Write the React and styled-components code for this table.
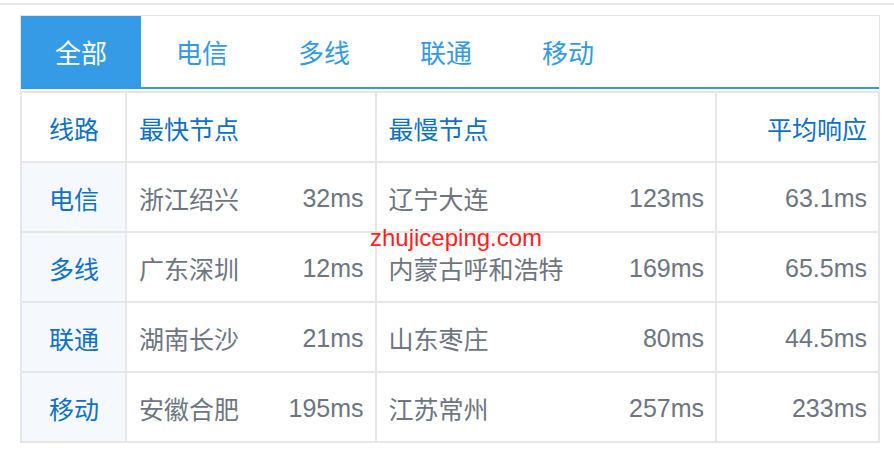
import styled, { createGlobalStyle } from "styled-components";

const Global = createGlobalStyle`
  body {
    margin: 0;
    background: #fff;
    font-family: "Liberation Sans", "Noto Sans CJK SC", sans-serif;
  }
`;

const TopRule = styled.div`
  height: 2px;
  margin-top: 3px;
  background: #e8e8e8;
`;

const Panel = styled.div`
  position: relative;
  margin: 10px 14px 0 20px;
  border: 1px solid #e5e5e5;
  border-bottom: none;
`;

const Tabs = styled.div`
  display: flex;
  height: 71px;
  border-bottom: 2px solid #3399e6;
`;

const Tab = styled.div`
  width: ${(p) => (p.active ? "120px" : "122px")};
  display: flex;
  align-items: center;
  justify-content: center;
  font-size: 26px;
  color: ${(p) => (p.active ? "#fff" : "#3399e6")};
  background: ${(p) => (p.active ? "#359be6" : "transparent")};
`;

const Table = styled.table`
  width: 860px;
  margin-top: 2px;
  margin-left: -1px;
  border-collapse: collapse;
  font-size: 25px;
`;

const Cell = styled.td`
  height: 66px;
  padding: 2px 11px 0 12px;
  border: 2px solid #e6e6e6;
  color: ${(p) => (p.head ? "#0e70c6" : "#6d7580")};
  text-align: ${(p) => p.align || "left"};
`;

const LineCell = styled(Cell)`
  width: 80px;
  text-align: center;
  color: #0e70c6;
  background: ${(p) => (p.head ? "#fff" : "#f5f9fd")};
`;

const Split = styled.div`
  display: flex;
  justify-content: space-between;
  align-items: center;
`;

const Watermark = styled.div`
  position: absolute;
  left: 349px;
  top: 208px;
  font-size: 24px;
  color: #ff1e1e;
  font-family: "Liberation Sans", sans-serif;
`;

const rows = [
  ["电信", "浙江绍兴", "32ms", "辽宁大连", "123ms", "63.1ms"],
  ["多线", "广东深圳", "12ms", "内蒙古呼和浩特", "169ms", "65.5ms"],
  ["联通", "湖南长沙", "21ms", "山东枣庄", "80ms", "44.5ms"],
  ["移动", "安徽合肥", "195ms", "江苏常州", "257ms", "233ms"],
];

export default function App() {
  return (
    <>
      <Global />
      <TopRule />
      <Panel>
        <Tabs>
          <Tab active>全部</Tab>
          <Tab>电信</Tab>
          <Tab>多线</Tab>
          <Tab>联通</Tab>
          <Tab>移动</Tab>
        </Tabs>
        <Table>
          <colgroup>
            <col style={{ width: "105px" }} />
            <col style={{ width: "250px" }} />
            <col style={{ width: "341px" }} />
            <col style={{ width: "163px" }} />
          </colgroup>
          <thead>
            <tr>
              <LineCell head>线路</LineCell>
              <Cell head>最快节点</Cell>
              <Cell head>最慢节点</Cell>
              <Cell head align="right">平均响应</Cell>
            </tr>
          </thead>
          <tbody>
            {rows.map((r) => (
              <tr key={r[0]}>
                <LineCell>{r[0]}</LineCell>
                <Cell>
                  <Split>
                    <span>{r[1]}</span>
                    <span>{r[2]}</span>
                  </Split>
                </Cell>
                <Cell>
                  <Split>
                    <span>{r[3]}</span>
                    <span>{r[4]}</span>
                  </Split>
                </Cell>
                <Cell align="right">{r[5]}</Cell>
              </tr>
            ))}
          </tbody>
        </Table>
        <Watermark>zhujiceping.com</Watermark>
      </Panel>
    </>
  );
}
